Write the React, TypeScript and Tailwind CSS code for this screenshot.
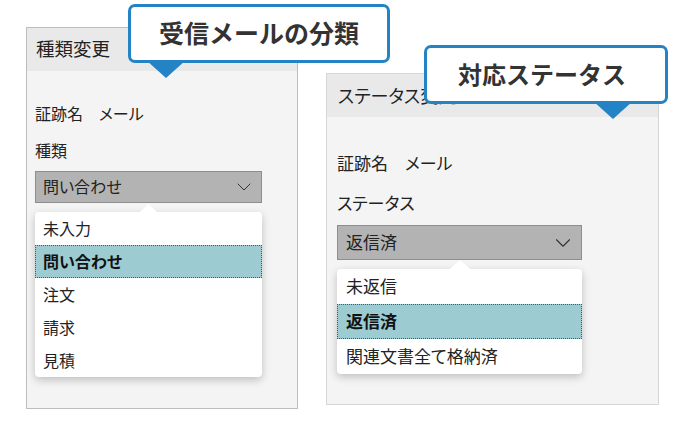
import { ChevronDown } from "lucide-react";

type PanelProps = {
  title: string;
  label: string;
  value: string;
  options: string[];
  big?: boolean;
};

const Pointer = ({ left, w, h }: { left: number; w: number; h: number }) => (
  <svg
    className="absolute"
    style={{ left, top: -h }}
    width={w}
    height={h}
    viewBox={`0 0 ${w} ${h}`}
  >
    <polygon points={`0,${h} ${w},${h} ${w / 2},0`} fill="#ffffff" />
  </svg>
);

const Panel = ({ title, label, value, options, big }: PanelProps) => {
  return (
    <div
      className={
        big
          ? "ml-[28px] mt-[73px] w-[333px] h-[332px] border border-[#d6d6d6] bg-[#f4f4f4] flex flex-col"
          : "ml-[26px] mt-[27px] w-[272px] h-[382px] border border-[#bdbdbd] bg-[#f4f4f4] flex flex-col"
      }
    >
      <div
        className={
          big
            ? "h-[43px] bg-[#e9e9e9] pl-[11px] pb-[2px] flex items-center text-[18px] text-[#222] whitespace-nowrap overflow-hidden"
            : "h-[43px] bg-[#e9e9e9] pl-[9px] pb-[2px] flex items-center text-[18.5px] text-[#222]"
        }
      >
        {title}
      </div>
      <div className={big ? "pl-[10px] flex flex-col" : "pl-[8px] flex flex-col"}>
        <div
          className={
            big
              ? "mt-[34px] h-[24px] pb-[2px] flex items-center text-[17px] text-[#222]"
              : "mt-[31px] h-[24px] pb-[2px] flex items-center text-[16px] text-[#222]"
          }
        >
          証跡名　メール
        </div>
        <div
          className={
            big
              ? "mt-[16px] h-[24px] pb-[2px] flex items-center text-[17px] text-[#222]"
              : "mt-[13px] h-[24px] pb-[2px] flex items-center text-[16px] text-[#222]"
          }
        >
          {label}
        </div>
        <div
          className={
            big
              ? "mt-[10px] w-[245px] h-[35px] bg-[#b3b3b3] border border-[#8e8e8e] flex items-center justify-between pl-[8px] pr-[5px] text-[17px] text-[#222]"
              : "mt-[8px] w-[227px] h-[32px] bg-[#b3b3b3] border border-[#8e8e8e] flex items-center justify-between pl-[7px] pr-[5px] text-[16px] text-[#222]"
          }
        >
          <span className="pb-[2px]">{value}</span>
          <ChevronDown size={big ? 26 : 24} strokeWidth={1} color="#333" />
        </div>
        <div
          className={
            big
              ? "relative mt-[9px] w-[245px] bg-white rounded-[4px] shadow-[0_3px_8px_rgba(0,0,0,0.22)] flex flex-col"
              : "relative mt-[9px] w-[227px] bg-white rounded-[4px] shadow-[0_3px_8px_rgba(0,0,0,0.22)] flex flex-col"
          }
        >
          {big ? <Pointer left={113} w={20} h={9} /> : <Pointer left={105} w={17} h={8} />}
          {options.map((o) => (
            <div
              key={o}
              className={
                (big ? "h-[35px] pl-[8px] text-[17px] " : "h-[33px] pl-[7px] text-[16px] ") +
                (o === value
                  ? "flex items-center pb-[2px] bg-[#9ccbd1] border border-dotted border-[#555] font-bold text-[#111]"
                  : "flex items-center pb-[2px] text-[#222] border border-transparent")
              }
            >
              {o}
            </div>
          ))}
        </div>
      </div>
    </div>
  );
};

const Callout = ({
  text,
  className,
  arrowLeft,
  size,
}: {
  text: string;
  className: string;
  arrowLeft: number;
  size: string;
}) => (
  <div
    className={
      "absolute bg-white border-[3px] border-[#2383c4] rounded-[7px] flex items-center justify-center pb-[2px] font-bold text-[#333] " +
      size +
      " " +
      className
    }
  >
    {text}
    <svg
      className="absolute"
      style={{ left: arrowLeft, top: "100%" }}
      width="40"
      height="19"
      viewBox="0 0 40 19"
    >
      <polygon points="0,0 40,0 20,18" fill="#2383c4" />
    </svg>
  </div>
);

export default function App() {
  return (
    <div
      className="relative w-[686px] h-[431px] bg-white overflow-hidden flex items-start leading-none [font-feature-settings:'palt']"
      style={{ fontFamily: '"Noto Sans CJK JP", "Noto Sans", sans-serif' }}
    >
      <Panel
        title="種類変更"
        label="種類"
        value="問い合わせ"
        options={["未入力", "問い合わせ", "注文", "請求", "見積"]}
      />
      <Panel
        big
        title="ステータス変更"
        label="ステータス"
        value="返信済"
        options={["未返信", "返信済", "関連文書全て格納済"]}
      />
      <Callout
        text="受信メールの分類"
        className="left-[128px] top-[4px] w-[262px] h-[59px] [font-feature-settings:normal]"
        arrowLeft={15}
        size="text-[25px]"
      />
      <Callout
        text="対応ステータス"
        className="left-[424px] top-[45px] w-[244px] h-[59px] pr-[8px] [font-feature-settings:normal]"
        arrowLeft={166}
        size="text-[24px]"
      />
    </div>
  );
}
